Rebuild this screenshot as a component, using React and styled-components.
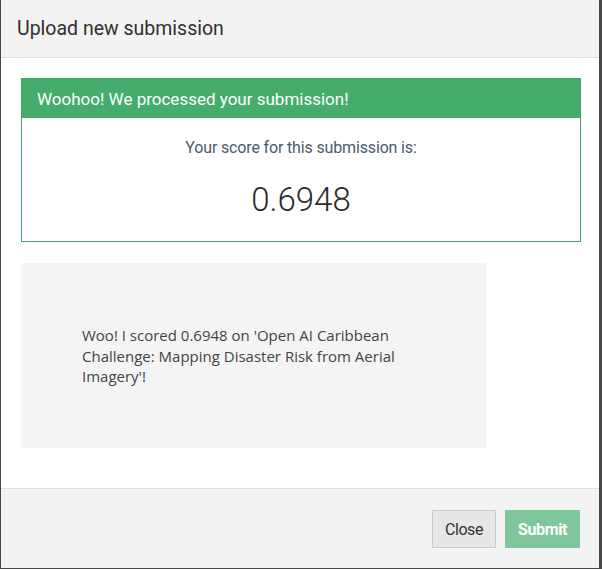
import React from 'react'
import styled, { createGlobalStyle } from 'styled-components'

const Global = createGlobalStyle`
  html, body { margin: 0; padding: 0; }
  body {
    background: #474747;
    font-family: "Open Sans", "Liberation Sans", sans-serif;
  }
`

const Backdrop = styled.div`
  display: flex;
  padding-left: 1px;
  height: 569px;
`

const Modal = styled.div`
  width: 598px;
  height: 568px;
  background: #fff;
  display: flex;
  flex-direction: column;
`

const Header = styled.div`
  height: 57px;
  background: #f3f3f3;
  border-bottom: 1px solid #dedede;
  display: flex;
  align-items: center;
  padding: 0 16px;
`

const Title = styled.h4`
  margin: 0;
  font-family: Roboto, sans-serif;
  font-size: 19.5px;
  font-weight: 400;
  color: #2f2f2f;
`

const Body = styled.div`
  flex: 1;
  padding: 20px 18px 40px 20px;
  display: flex;
  flex-direction: column;
  gap: 21px;
`

const Panel = styled.div`
  border: 1px solid #44a36a;
`

const PanelHead = styled.div`
  height: 39px;
  background: #44ad6c;
  color: #fff;
  display: flex;
  align-items: center;
  padding: 0 15px;
  font-family: Roboto, sans-serif;
  font-size: 17px;
`

const PanelBody = styled.div`
  height: 123px;
  display: flex;
  flex-direction: column;
  align-items: center;
  font-family: Roboto, sans-serif;
`

const ScoreLabel = styled.div`
  margin-top: 20px;
  font-size: 16px;
  letter-spacing: -0.15px;
  color: #4c5a6a;
`

const Score = styled.div`
  margin-top: 23px;
  font-weight: 300;
  font-size: 33px;
  color: #2b2b2b;
`

const ShareBox = styled.div`
  width: 465px;
  height: 185px;
  box-sizing: border-box;
  padding: 62px 60px 0 61px;
  background: #f4f4f4;
  font-size: 15px;
  line-height: 20.5px;
  color: #444;
`

const Footer = styled.div`
  height: 80px;
  box-sizing: border-box;
  background: #f3f3f3;
  border-top: 1px solid #dedede;
  display: flex;
  justify-content: flex-end;
  align-items: center;
  gap: 9px;
  padding: 1px 19px 0 0;
`

const Button = styled.button`
  height: 38px;
  padding: 0 12px;
  border: 1px solid ${p => (p.$primary ? '#7fc79b' : '#c9c9c9')};
  background: ${p => (p.$primary ? '#7fc79b' : '#e7e7e7')};
  color: ${p => (p.$primary ? '#fff' : '#333')};
  font-family: Roboto, sans-serif;
  font-weight: ${p => (p.$primary ? 700 : 400)};
  font-size: 16px;
  letter-spacing: -0.4px;
  border-radius: 0;
`

export default function App() {
  return (
    <Backdrop>
      <Global />
      <Modal>
        <Header>
          <Title>Upload new submission</Title>
        </Header>
        <Body>
          <Panel>
            <PanelHead>Woohoo! We processed your submission!</PanelHead>
            <PanelBody>
              <ScoreLabel>Your score for this submission is:</ScoreLabel>
              <Score>0.6948</Score>
            </PanelBody>
          </Panel>
          <ShareBox>
            Woo! I scored 0.6948 on 'Open AI Caribbean Challenge: Mapping Disaster Risk from Aerial Imagery'!
          </ShareBox>
        </Body>
        <Footer>
          <Button>Close</Button>
          <Button $primary>Submit</Button>
        </Footer>
      </Modal>
    </Backdrop>
  )
}
